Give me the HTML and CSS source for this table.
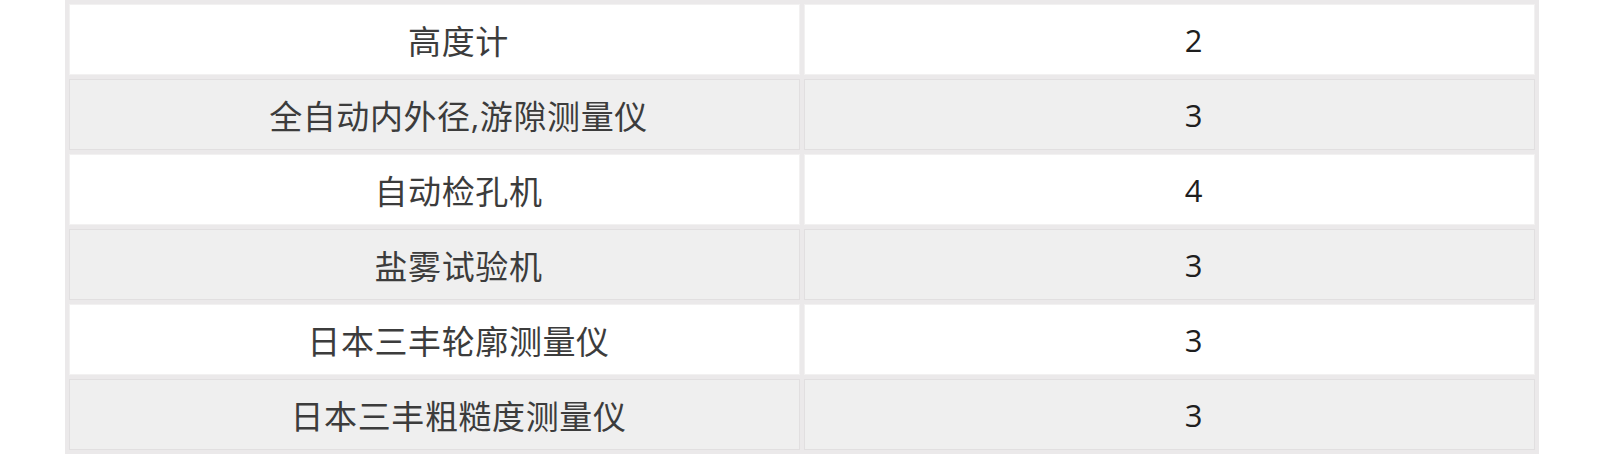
FILE: index.html
```html
<!DOCTYPE html>
<html lang="zh-CN">
<head>
<meta charset="utf-8">
<title>设备列表</title>
<link rel="stylesheet" href="styles.css">
</head>
<body>
<div class="table">
  <div class="row">
    <div class="cell">高度计</div>
    <div class="cell num">2</div>
  </div>
  <div class="row alt">
    <div class="cell">全自动内外径,游隙测量仪</div>
    <div class="cell num">3</div>
  </div>
  <div class="row">
    <div class="cell">自动检孔机</div>
    <div class="cell num">4</div>
  </div>
  <div class="row alt">
    <div class="cell">盐雾试验机</div>
    <div class="cell num">3</div>
  </div>
  <div class="row">
    <div class="cell">日本三丰轮廓测量仪</div>
    <div class="cell num">3</div>
  </div>
  <div class="row alt">
    <div class="cell">日本三丰粗糙度测量仪</div>
    <div class="cell num">3</div>
  </div>
</div>
</body>
</html>
```

FILE: styles.css
```css
html, body {
  margin: 0;
  padding: 0;
  background: #ffffff;
}

body {
  padding-left: 65px;
  font-family: "Open Sans", "Noto Sans CJK SC", sans-serif;
}

.table {
  width: 1474px;
  box-sizing: border-box;
  background: #ebe9ea;
  padding: 4px;
  display: flex;
  flex-direction: column;
  gap: 4px;
}

.row {
  display: grid;
  grid-template-columns: 731px 731px;
  gap: 4px;
}

.cell {
  height: 71px;
  box-sizing: border-box;
  background: #ffffff;
  border: 1px solid #f2f1f1;
  display: flex;
  align-items: center;
  justify-content: center;
  padding-left: 48px;
  font-size: 33px;
  letter-spacing: 0.6px;
  color: #3c3c3c;
}

.row.alt .cell {
  background: #efefef;
  border: 1px solid #e1dfe0;
}

.cell.num {
  color: #1e1e1e;
  font-size: 31px;
  letter-spacing: 0;
}
```
